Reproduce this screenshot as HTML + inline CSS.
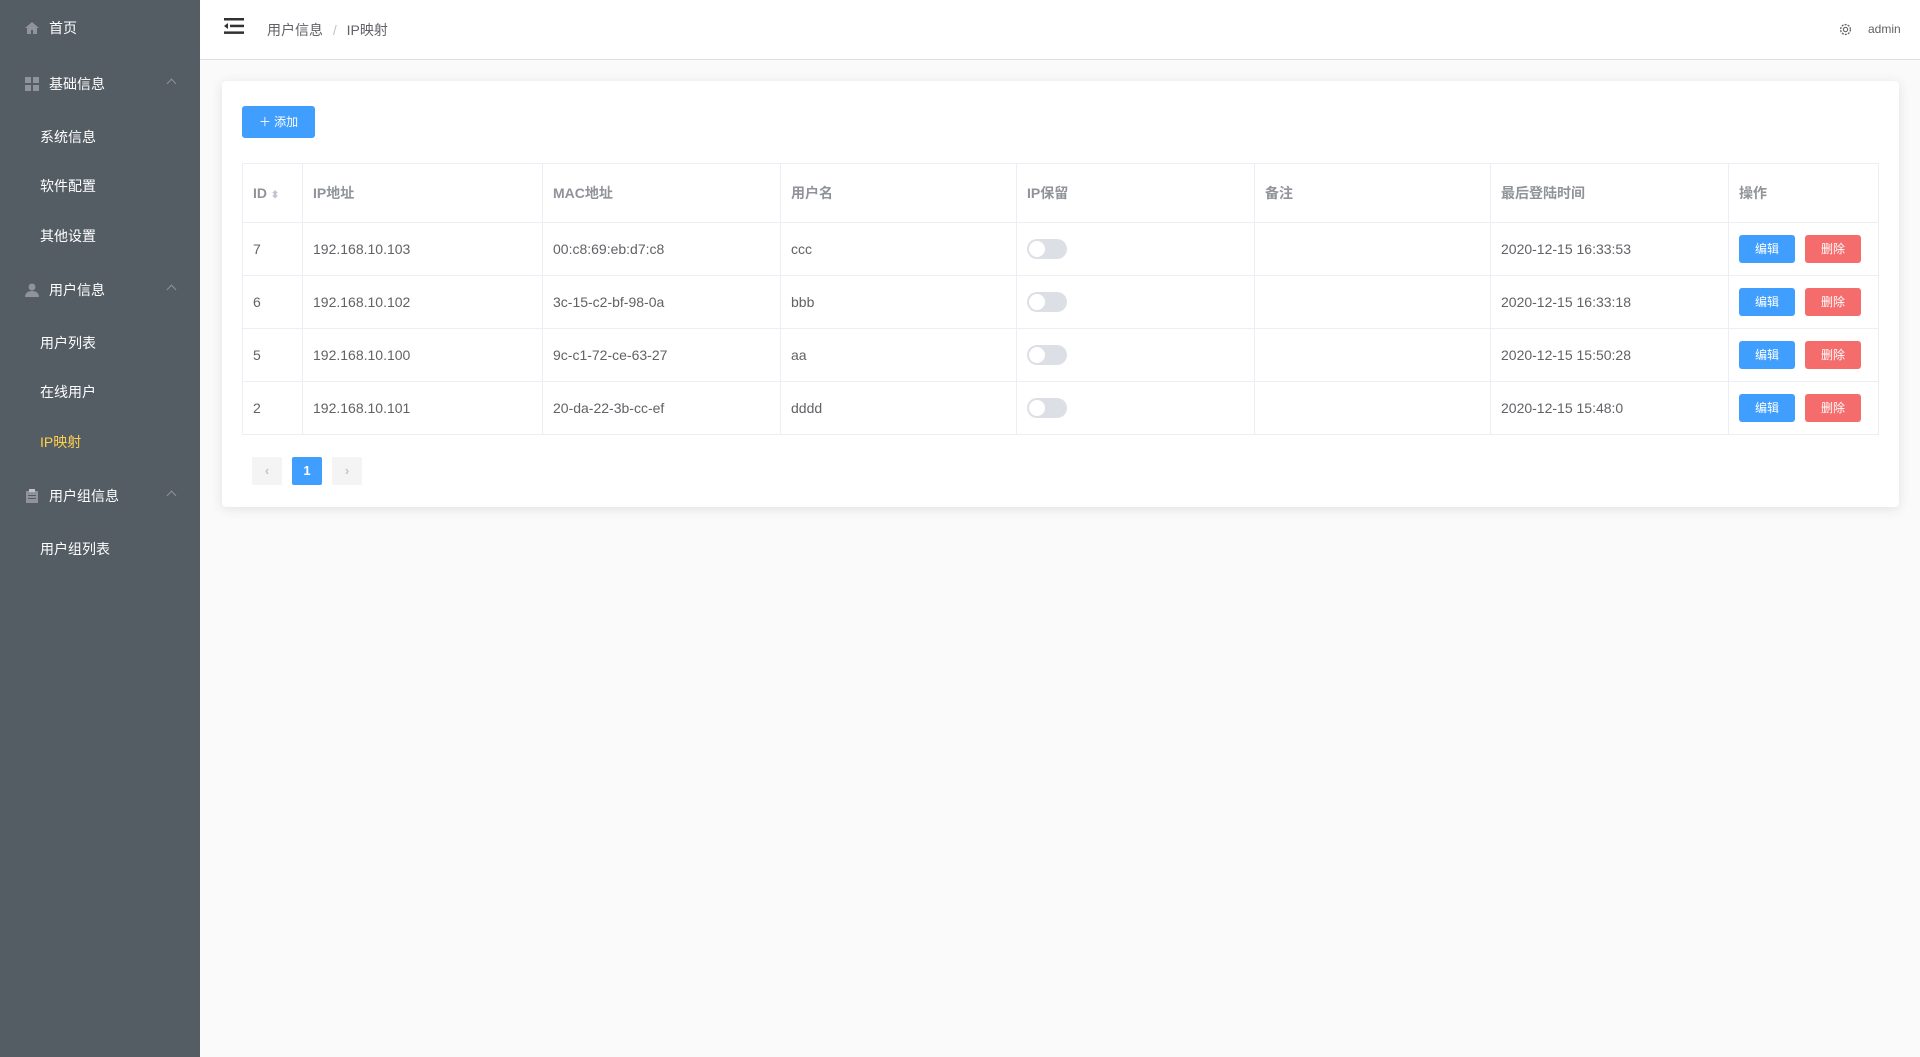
<!DOCTYPE html>
<html><head><meta charset="utf-8"><style>
*{box-sizing:border-box;margin:0;padding:0}
body{width:1920px;height:1057px;background:#fafafa;font-family:"Liberation Sans","Noto Sans CJK SC",sans-serif;font-size:14px;color:#606266;position:relative;overflow:hidden}
.side{position:absolute;left:0;top:0;width:200px;height:1057px;background:#545c64}
.mi{position:absolute;left:0;width:200px;color:#fff;font-size:14px;line-height:20px}
.mi .ic{position:absolute;left:25px;top:3px;width:14px;height:14px}
.mi .t{position:absolute;left:49px}
.sub .t{left:40px}
.arr{position:absolute;left:168px;top:6px;width:7px;height:7px;border-left:1px solid #909399;border-top:1px solid #909399;transform:rotate(45deg)}
.hdr{position:absolute;left:200px;top:0;right:0;height:60px;background:#fff;border-bottom:1px solid #dcdfe6}
.card{position:absolute;left:222px;top:81px;width:1677px;height:426px;background:#fff;border-radius:4px;box-shadow:0 2px 12px rgba(0,0,0,.1)}
.btn{position:absolute;color:#fff;border-radius:3px;font-size:12px;text-align:center}
table{position:absolute;left:20px;top:82px;width:1636px;border-collapse:collapse;table-layout:fixed}
td,th{border:1px solid #ebeef5;padding:0 10px;text-align:left;font-size:14px}
th{height:59px;color:#909399;font-weight:bold}
td{height:53px;color:#606266;position:relative}
.sw{display:inline-block;width:40px;height:20px;border-radius:10px;background:#dcdfe6;position:relative;vertical-align:middle}
.sw:after{content:"";position:absolute;left:2px;top:2px;width:16px;height:16px;border-radius:50%;background:#fff}
.e,.d{display:inline-block;width:56px;height:28px;line-height:28px;border-radius:3px;color:#fff;font-size:12px;text-align:center;vertical-align:middle}
.e{background:#409eff}.d{background:#f56c6c;margin-left:10px}
.pg{position:absolute;top:376px;width:30px;height:28px;line-height:28px;text-align:center;border-radius:2px;background:#f4f4f5;color:#c0c4cc;font-size:13px;font-weight:bold}
</style></head><body>
<div class="side">
 <div class="mi" style="top:18px"><svg class="ic" viewBox="0 0 14 14"><path d="M7 1L0 7h2v6h4V9h2v4h4V7h2z" fill="#909399"/></svg><span class="t">首页</span></div>
 <div class="mi" style="top:74px"><svg class="ic" viewBox="0 0 14 14" fill="#909399"><rect x="0" y="0" width="6" height="6"/><rect x="8" y="0" width="6" height="6"/><rect x="0" y="8" width="6" height="6"/><rect x="8" y="8" width="6" height="6"/></svg><span class="t">基础信息</span><i class="arr"></i></div>
 <div class="mi sub" style="top:127px"><span class="t">系统信息</span></div>
 <div class="mi sub" style="top:176px"><span class="t">软件配置</span></div>
 <div class="mi sub" style="top:226px"><span class="t">其他设置</span></div>
 <div class="mi" style="top:280px"><svg class="ic" viewBox="0 0 14 14" fill="#909399"><circle cx="7" cy="4" r="3.5"/><path d="M0 14c0-4 3-6 7-6s7 2 7 6z"/></svg><span class="t">用户信息</span><i class="arr"></i></div>
 <div class="mi sub" style="top:333px"><span class="t">用户列表</span></div>
 <div class="mi sub" style="top:382px"><span class="t">在线用户</span></div>
 <div class="mi sub" style="top:432px;color:#ffd04b"><span class="t">IP映射</span></div>
 <div class="mi" style="top:486px"><svg class="ic" viewBox="0 0 14 14" fill="#909399"><rect x="1" y="2" width="12" height="12"/><rect x="4" y="0" width="6" height="3" fill="#c0c4cc"/><rect x="3" y="6" width="8" height="1" fill="#545c64"/><rect x="3" y="9" width="8" height="1" fill="#545c64"/></svg><span class="t">用户组信息</span><i class="arr"></i></div>
 <div class="mi sub" style="top:539px"><span class="t">用户组列表</span></div>
</div>
<div class="hdr">
 <svg style="position:absolute;left:24px;top:18px" width="20" height="16" viewBox="0 0 20 16"><rect x="0" y="0" width="20" height="2.5" fill="#303133"/><rect x="6" y="6.7" width="14" height="2.5" fill="#303133"/><rect x="0" y="13.4" width="20" height="2.5" fill="#303133"/><path d="M0 8L4 5v6z" fill="#303133"/></svg>
 <div style="position:absolute;left:67px;top:20px;color:#606266">用户信息 <span style="color:#c0c4cc;margin:0 6px">/</span> IP映射</div>
 <svg style="position:absolute;left:1639px;top:23px" width="13" height="13" viewBox="0 0 14 14"><circle cx="7" cy="7" r="5.3" fill="none" stroke="#606266" stroke-width="1.4" stroke-dasharray="2.2 1.2"/><circle cx="7" cy="7" r="2.3" fill="none" stroke="#606266" stroke-width="1.2"/></svg>
 <div style="position:absolute;left:1668px;top:22px;font-size:12px;color:#606266">admin</div>
</div>
<div class="card">
 <div class="btn" style="left:20px;top:25px;width:73px;height:32px;line-height:32px;background:#409eff">＋ 添加</div>
 <table>
  <colgroup><col style="width:60px"><col style="width:240px"><col style="width:238px"><col style="width:236px"><col style="width:238px"><col style="width:236px"><col style="width:238px"><col style="width:150px"></colgroup>
  <tr><th>ID <span style="color:#c0c4cc;font-size:10px">⬍</span></th><th>IP地址</th><th>MAC地址</th><th>用户名</th><th>IP保留</th><th>备注</th><th>最后登陆时间</th><th>操作</th></tr>
  <tr><td>7</td><td>192.168.10.103</td><td>00:c8:69:eb:d7:c8</td><td>ccc</td><td><span class="sw"></span></td><td></td><td>2020-12-15 16:33:53</td><td><span class="e">编辑</span><span class="d">删除</span></td></tr>
  <tr><td>6</td><td>192.168.10.102</td><td>3c-15-c2-bf-98-0a</td><td>bbb</td><td><span class="sw"></span></td><td></td><td>2020-12-15 16:33:18</td><td><span class="e">编辑</span><span class="d">删除</span></td></tr>
  <tr><td>5</td><td>192.168.10.100</td><td>9c-c1-72-ce-63-27</td><td>aa</td><td><span class="sw"></span></td><td></td><td>2020-12-15 15:50:28</td><td><span class="e">编辑</span><span class="d">删除</span></td></tr>
  <tr><td>2</td><td>192.168.10.101</td><td>20-da-22-3b-cc-ef</td><td>dddd</td><td><span class="sw"></span></td><td></td><td>2020-12-15 15:48:0</td><td><span class="e">编辑</span><span class="d">删除</span></td></tr>
 </table>
 <div class="pg" style="left:30px">‹</div>
 <div class="pg" style="left:70px;background:#409eff;color:#fff">1</div>
 <div class="pg" style="left:110px">›</div>
</div>
</body></html>
